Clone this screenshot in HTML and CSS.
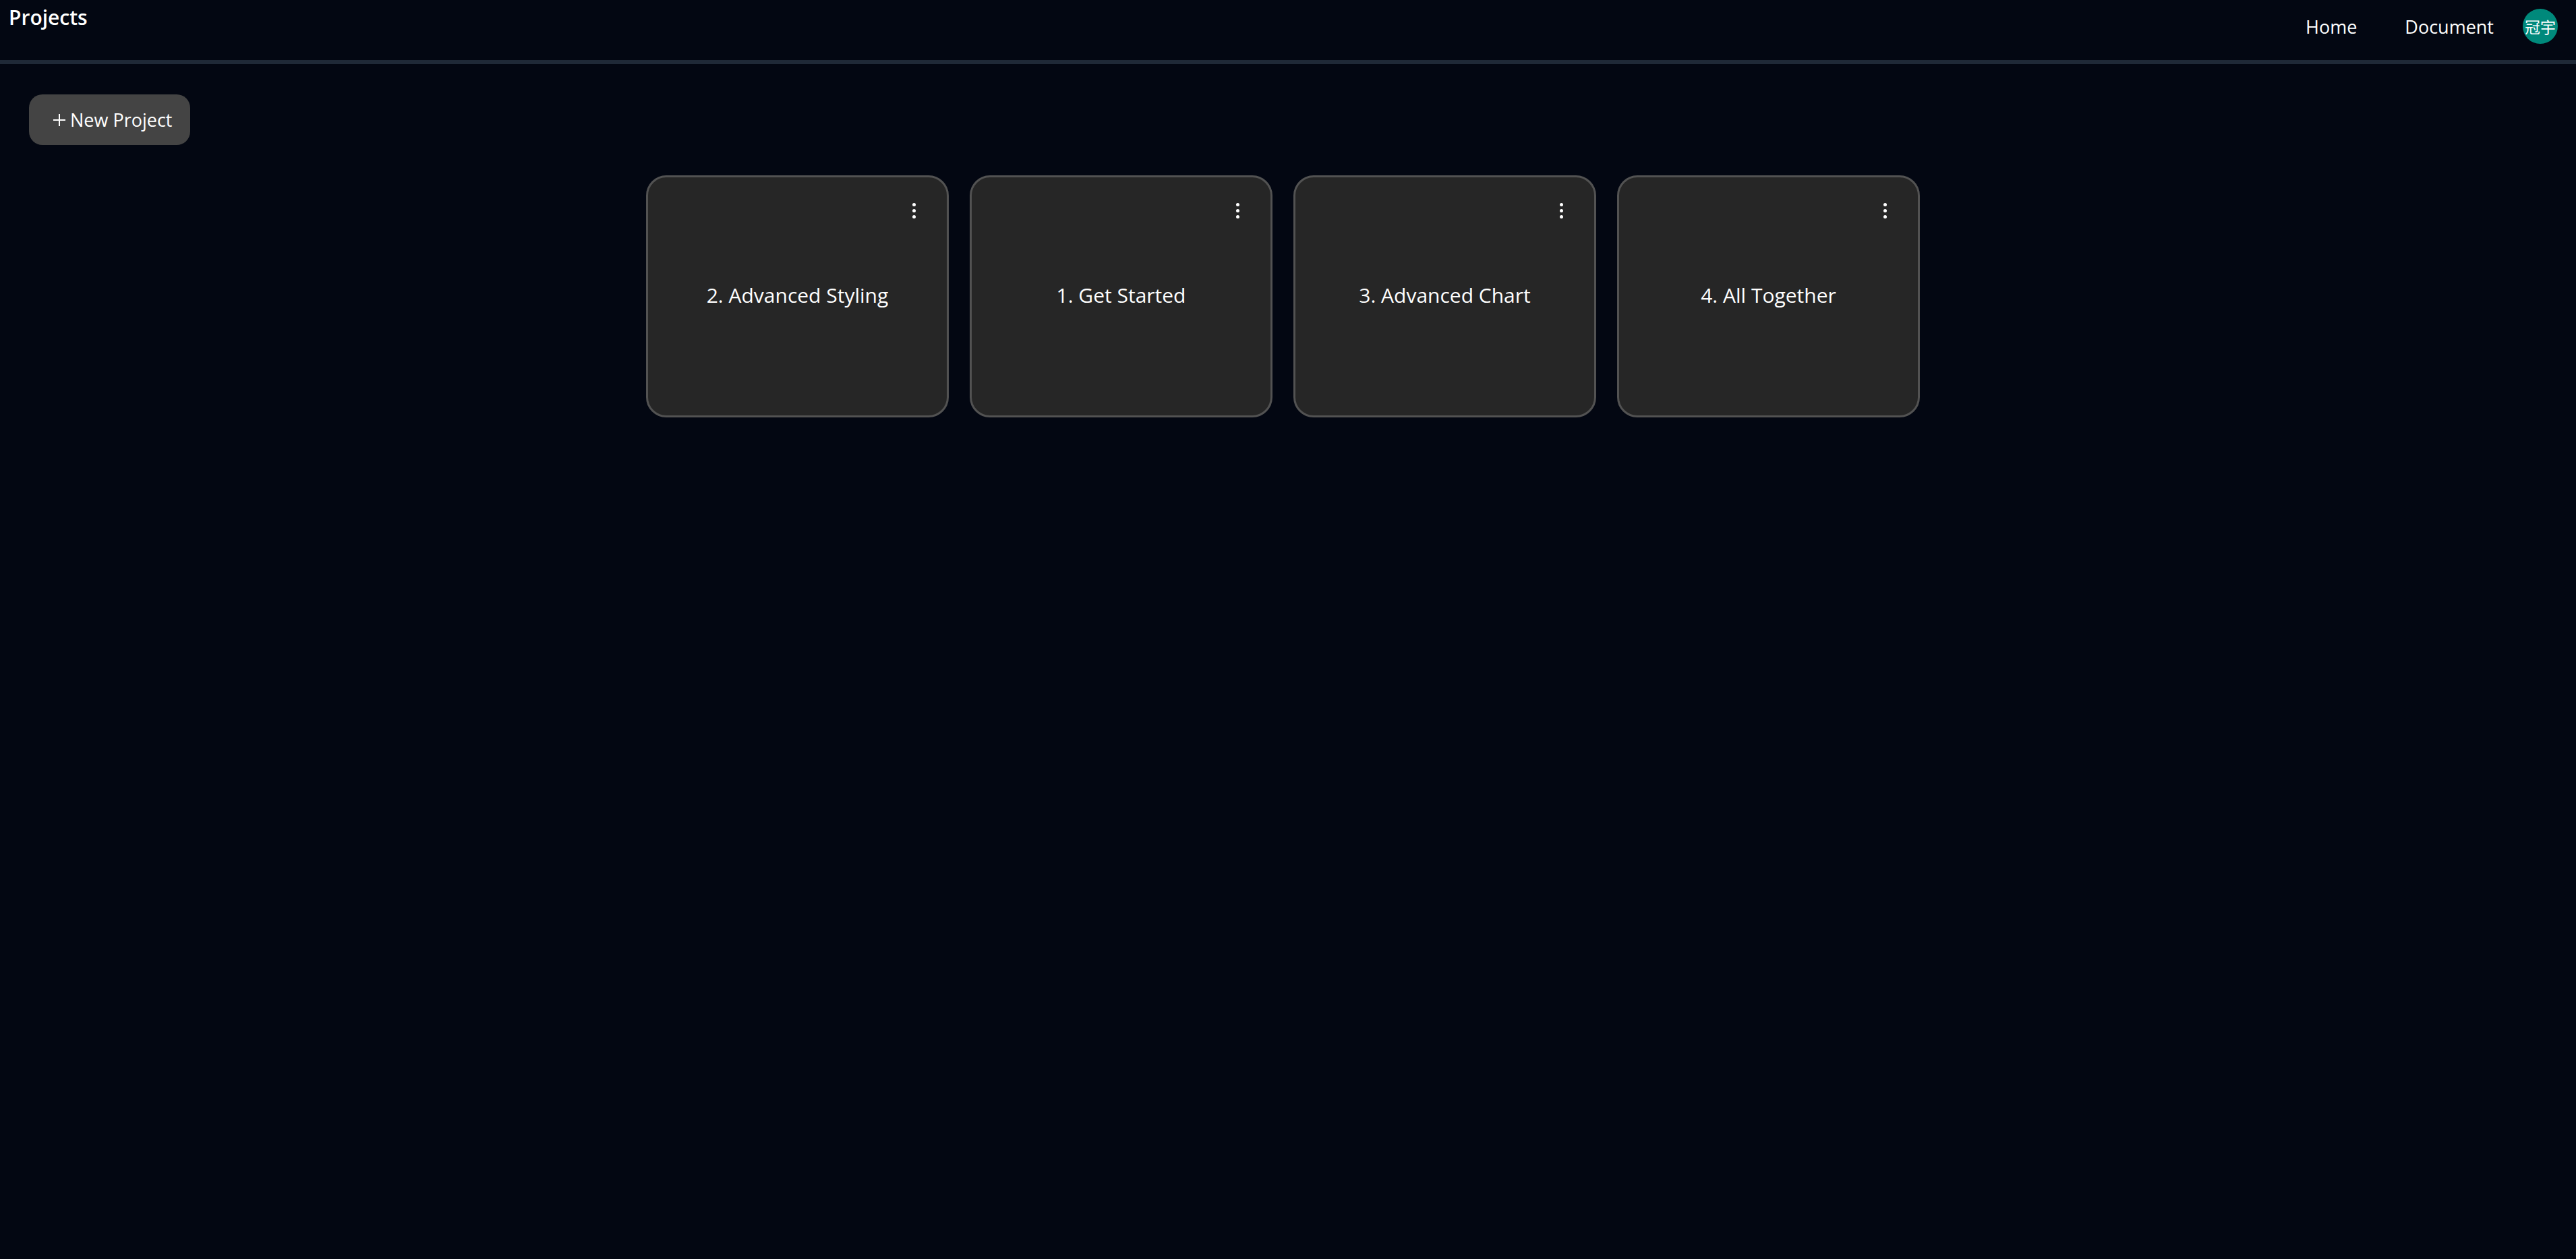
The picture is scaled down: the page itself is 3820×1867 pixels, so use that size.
FILE: index.html
```html
<!DOCTYPE html>
<html>

<head>
    <title>Projects</title>
    <meta charset="utf-8">
    <meta name="viewport" content="width=device-width, initial-scale=1.0">
    <link rel="stylesheet" href="styles.css">
</head>

<body>

    <header class="topbar">
        <h1 class="titel">Projects</h1>
        <nav class="menu">
            <a href="#" class="link">Home</a>
            <a href="#" class="link">Document</a>
            <span class="avatar">冠宇</span>
        </nav>
    </header>

    <main class="indhold">
        <div class="knapper">
            <button class="ny">
                <svg class="plus" viewBox="0 0 20 20" width="20" height="20">
                    <path d="M10 1v18M1 10h18" stroke="#fff" stroke-width="2" fill="none" />
                </svg>
                New Project
            </button>
        </div>

        <section id="projekter">
            <article class="kort">
                <span class="prikker"><i></i><i></i><i></i></span>
                <h2 class="navn">2. Advanced Styling</h2>
            </article>
            <article class="kort">
                <span class="prikker"><i></i><i></i><i></i></span>
                <h2 class="navn">1. Get Started</h2>
            </article>
            <article class="kort">
                <span class="prikker"><i></i><i></i><i></i></span>
                <h2 class="navn">3. Advanced Chart</h2>
            </article>
            <article class="kort">
                <span class="prikker"><i></i><i></i><i></i></span>
                <h2 class="navn">4. All Together</h2>
            </article>
        </section>
    </main>

</body>

</html>
```

FILE: styles.css
```css
body {
    margin: 0;
    background: #030712;
    color: white;
    font-family: "Open Sans", "Noto Sans CJK SC", sans-serif;
    min-height: 100vh;
}

.topbar {
    display: flex;
    justify-content: space-between;
    height: 89px;
    border-bottom: 6px solid #1f2937;
}

.titel {
    margin: 0;
    padding: 8px 0 0 13px;
    font-size: 30px;
    font-weight: 600;
    line-height: 1.2;
}

.menu {
    display: flex;
    align-items: center;
    height: 78px;
    padding-right: 27px;
}

.link {
    color: white;
    text-decoration: none;
    font-size: 27px;
    margin-left: 71px;
}

.avatar {
    width: 52px;
    height: 52px;
    border-radius: 50%;
    background: #00897b;
    margin-left: 43px;
    display: flex;
    align-items: center;
    justify-content: center;
    font-size: 23px;
    font-family: "Noto Sans CJK SC", sans-serif;
}

.knapper {
    padding: 45px 0 0 43px;
}

.ny {
    display: flex;
    align-items: center;
    gap: 6px;
    width: 239px;
    height: 75px;
    padding: 0 0 0 35px;
    border: none;
    border-radius: 20px;
    background: #444444;
    color: white;
    font-family: "Open Sans", sans-serif;
    font-size: 27px;
}

#projekter {
    display: flex;
    justify-content: center;
    gap: 31px;
    margin-top: 45px;
    padding-right: 15px;
}

.kort {
    position: relative;
    box-sizing: border-box;
    width: 449px;
    height: 359px;
    background: #262626;
    border: 3px solid #525252;
    border-radius: 30px;
    display: flex;
    align-items: center;
    justify-content: center;
}

.navn {
    margin: 0 0 4px;
    font-size: 30px;
    font-weight: 400;
}

.prikker {
    position: absolute;
    top: 38px;
    right: 46px;
    display: flex;
    flex-direction: column;
    gap: 4px;
}

.prikker i {
    width: 5px;
    height: 5px;
    border-radius: 50%;
    background: white;
}
```
